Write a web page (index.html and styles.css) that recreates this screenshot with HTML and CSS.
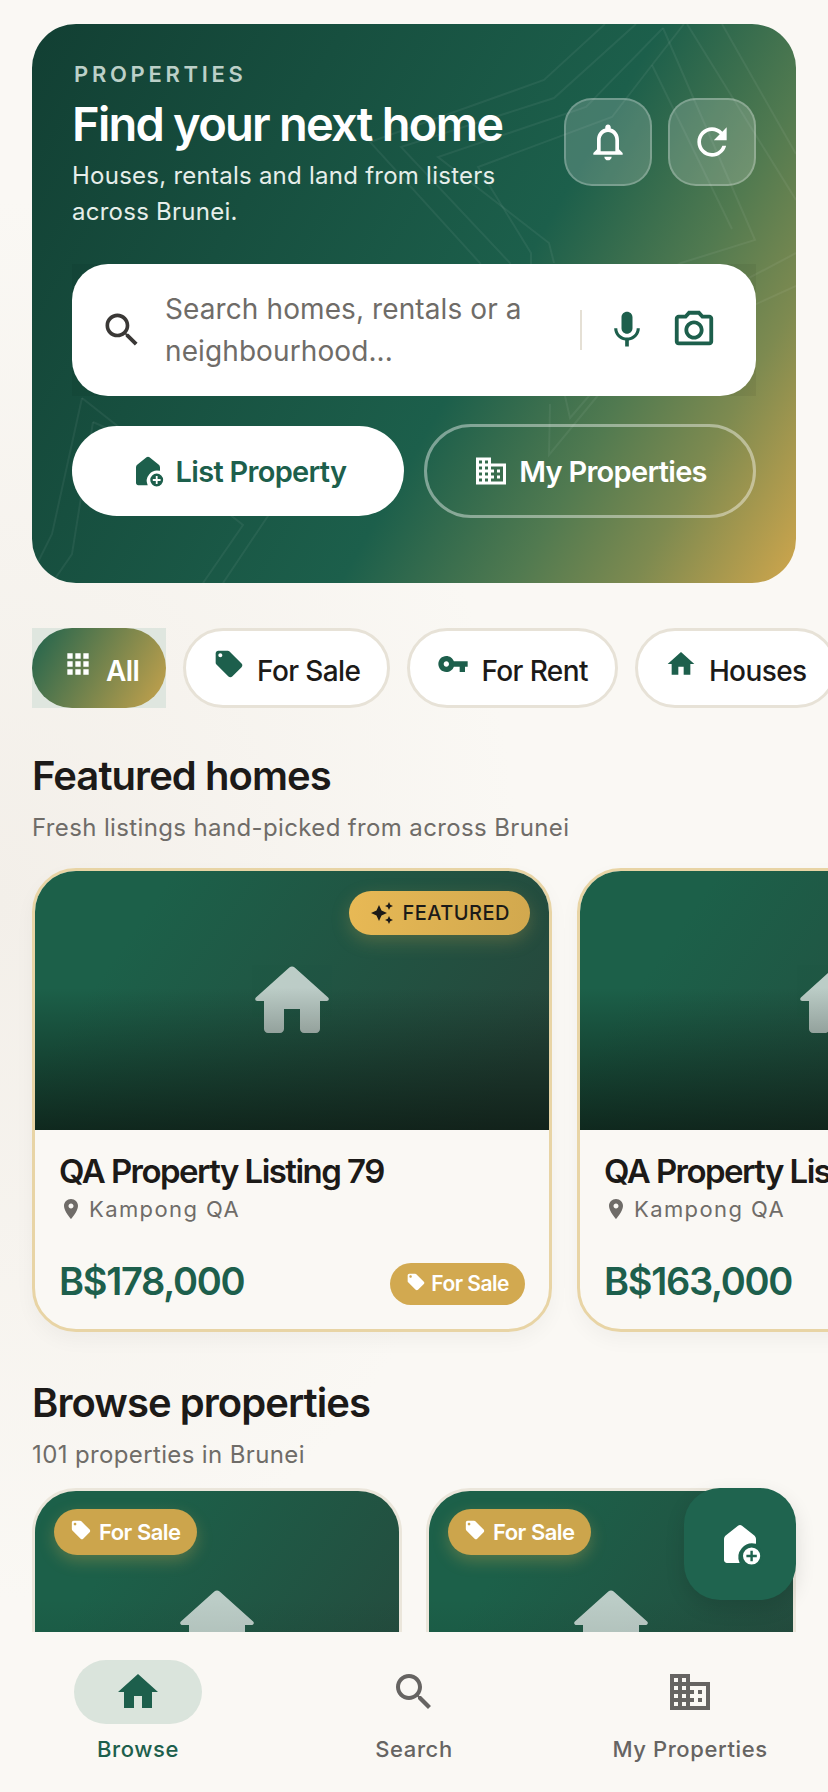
FILE: index.html
```html
<!DOCTYPE html>
<html lang="en">
<head>
  <meta charset="UTF-8" />
  <meta name="viewport" content="width=device-width, initial-scale=1.0" />
  <title>Properties</title>
  <link rel="stylesheet" href="styles.css">
</head>
<body>

  <!-- icon sheet -->
  <svg class="icon-sheet" xmlns="http://www.w3.org/2000/svg">
    <symbol id="i-bell" viewBox="0 0 24 24"><path d="M12 22c1.1 0 2-.9 2-2h-4c0 1.1.89 2 2 2zm6-6v-5c0-3.07-1.64-5.64-4.5-6.32V4c0-.83-.67-1.5-1.5-1.5s-1.5.67-1.5 1.5v.68C7.63 5.36 6 7.92 6 11v5l-2 2v1h16v-1l-2-2zm-2 1H8v-6c0-2.48 1.51-4.5 4-4.5s4 2.02 4 4.5v6z"/></symbol>
    <symbol id="i-refresh" viewBox="0 0 24 24"><path d="M17.65 6.35C16.2 4.9 14.21 4 12 4c-4.42 0-7.99 3.58-7.99 8s3.57 8 7.99 8c3.73 0 6.84-2.55 7.73-6h-2.08c-.82 2.33-3.04 4-5.65 4-3.31 0-6-2.69-6-6s2.69-6 6-6c1.66 0 3.14.69 4.22 1.78L13 11h7V4l-2.35 2.35z"/></symbol>
    <symbol id="i-search" viewBox="0 0 24 24"><path d="M15.5 14h-.79l-.28-.27C15.41 12.59 16 11.11 16 9.5 16 5.91 13.09 3 9.5 3S3 5.91 3 9.5 5.91 16 9.5 16c1.61 0 3.09-.59 4.23-1.57l.27.28v.79l5 4.99L20.49 19l-4.99-5zm-6 0C7.01 14 5 11.99 5 9.5S7.01 5 9.5 5 14 7.01 14 9.5 11.99 14 9.5 14z"/></symbol>
    <symbol id="i-mic" viewBox="0 0 24 24"><path d="M12 14c1.66 0 3-1.34 3-3V5c0-1.66-1.34-3-3-3S9 3.34 9 5v6c0 1.66 1.34 3 3 3zm5.3-3c0 3-2.54 5.1-5.3 5.1S6.7 14 6.7 11H5c0 3.41 2.72 6.23 6 6.72V21h2v-3.28c3.28-.48 6-3.3 6-6.72h-1.7z"/></symbol>
    <symbol id="i-camera" viewBox="0 0 24 24"><path d="M20 4h-3.17L15 2H9L7.17 4H4c-1.1 0-2 .9-2 2v12c0 1.1.9 2 2 2h16c1.1 0 2-.9 2-2V6c0-1.1-.9-2-2-2zm0 14H4V6h4.05l1.83-2h4.24l1.83 2H20v12zM12 7c-2.76 0-5 2.24-5 5s2.24 5 5 5 5-2.24 5-5-2.24-5-5-5zm0 8c-1.65 0-3-1.35-3-3s1.35-3 3-3 3 1.35 3 3-1.35 3-3 3z"/></symbol>
    <symbol id="i-domain" viewBox="0 0 24 24"><path d="M12 7V3H2v18h20V7H10zM6 19H4v-2h2v2zm0-4H4v-2h2v2zm0-4H4V9h2v2zm0-4H4V5h2v2zm4 12H8v-2h2v2zm0-4H8v-2h2v2zm0-4H8V9h2v2zm0-4H8V5h2v2zm10 12h-8v-2h2v-2h-2v-2h2v-2h-2V9h8v10zm-2-8h-2v2h2v-2zm0 4h-2v2h2v-2z"/></symbol>
    <symbol id="i-apps" viewBox="0 0 24 24"><path d="M4 8h4V4H4v4zm6 12h4v-4h-4v4zm-6 0h4v-4H4v4zm0-6h4v-4H4v4zm6 0h4v-4h-4v4zm6-10v4h4V4h-4zm-6 4h4V4h-4v4zm6 6h4v-4h-4v4zm0 6h4v-4h-4v4z"/></symbol>
    <symbol id="i-tag" viewBox="0 0 24 24"><path d="M21.41 11.58l-9-9C12.05 2.22 11.55 2 11 2H4c-1.1 0-2 .9-2 2v7c0 .55.22 1.05.59 1.42l9 9c.36.36.86.58 1.41.58.55 0 1.05-.22 1.41-.59l7-7c.37-.36.59-.86.59-1.41 0-.55-.23-1.06-.59-1.42zM5.5 7C4.67 7 4 6.33 4 5.5S4.67 4 5.5 4 7 4.67 7 5.5 6.33 7 5.5 7z"/></symbol>
    <symbol id="i-key" viewBox="0 0 24 24"><path d="M12.65 10C11.83 7.67 9.61 6 7 6c-3.31 0-6 2.69-6 6s2.69 6 6 6c2.61 0 4.83-1.67 5.65-4H17v4h4v-4h2v-4H12.65zM7 14c-1.1 0-2-.9-2-2s.9-2 2-2 2 .9 2 2-.9 2-2 2z"/></symbol>
    <symbol id="i-home" viewBox="0 0 24 24"><path d="M10 20v-6h4v6h5v-8h3L12 3 2 12h3v8z"/></symbol>
    <symbol id="i-home-round" viewBox="0 0 24 24"><path d="M10 19v-5h4v5c0 .55.45 1 1 1h3c.55 0 1-.45 1-1v-7h1.7c.46 0 .68-.57.33-.87L12.67 3.6c-.38-.34-.96-.34-1.34 0l-8.36 7.53c-.34.3-.13.87.33.87H5v7c0 .55.45 1 1 1h3c.55 0 1-.45 1-1z"/></symbol>
    <symbol id="i-pin" viewBox="0 0 24 24"><path d="M12 2C8.13 2 5 5.13 5 9c0 5.25 7 13 7 13s7-7.75 7-13c0-3.87-3.13-7-7-7zm0 9.5c-1.38 0-2.5-1.12-2.5-2.5s1.12-2.5 2.5-2.5 2.5 1.12 2.5 2.5-1.12 2.5-2.5 2.5z"/></symbol>
    <symbol id="i-sparkle" viewBox="0 0 24 24"><path d="M19 9l1.25-2.75L23 5l-2.75-1.25L19 1l-1.25 2.75L15 5l2.75 1.25L19 9zm-7.5.5L9 4 6.5 9.5 1 12l5.5 2.5L9 20l2.5-5.5L17 12l-5.5-2.5zM19 15l-1.25 2.75L15 19l2.75 1.25L19 23l1.25-2.75L23 19l-2.75-1.25L19 15z"/></symbol>
    <symbol id="i-house-base" viewBox="0 0 24 24"><path d="M12 2.5c-.4 0-.7.15-1 .4L5 7.6c-.6.5-1 1.2-1 2V20c0 .8.7 1.5 1.5 1.5h6.3a7 7 0 0 1 8.2-9.6V9.6c0-.8-.4-1.5-1-2l-6-4.7c-.3-.25-.6-.4-1-.4z"/></symbol>
  </svg>

  <section class="hero">
    <!-- faint star outlines behind the hero content -->
    <svg class="hero-lines" viewBox="0 0 764 559" fill="none">
      <polyline points="573,0 512,56 338,118 448,239 470,300"/>
      <polyline points="604,0 522,74 369,123 478,239 490,300"/>
      <polyline points="631,4 554,83 406,133 517,219 522,239"/>
      <polyline points="620,41 580,93 446,143 499,229 499,250"/>
      <polyline points="631,4 723,216 649,239 560,290"/>
      <polyline points="620,41 652,0"/>
      <polyline points="620,41 700,205"/>
      <polyline points="655,0 764,176"/>
      <polyline points="690,0 764,130"/>
      <polyline points="764,229 649,290"/>
      <polyline points="764,262 680,300"/>
      <polyline points="50,374 20,510 0,550"/>
      <polyline points="61,398 40,530 20,559"/>
      <polyline points="50,374 211,501 171,559"/>
      <polyline points="61,398 244,480 191,559"/>
      <polyline points="518,380 517,431 600,330"/>
      <polyline points="528,350 538,394 580,345"/>
    </svg>

    <div class="hero-top">
      <div class="hero-text">
        <div class="eyebrow">PROPERTIES</div>
        <h1>Find your next home</h1>
        <p>Houses, rentals and land from listers across Brunei.</p>
      </div>
      <div class="hero-btns">
        <div class="glass-btn"><svg class="icon icon-bell"><use href="#i-bell"/></svg></div>
        <div class="glass-btn"><svg class="icon icon-refresh"><use href="#i-refresh"/></svg></div>
      </div>
    </div>

    <div class="search-wrap">
      <div class="search">
        <svg class="icon icon-search"><use href="#i-search"/></svg>
        <div class="search-text">Search homes, rentals or a neighbourhood...</div>
        <div class="search-divider"></div>
        <svg class="icon icon-mic"><use href="#i-mic"/></svg>
        <svg class="icon icon-camera"><use href="#i-camera"/></svg>
      </div>
    </div>

    <div class="hero-actions">
      <div class="action action-solid">
        <svg class="icon icon-add" viewBox="0 0 24 24"><use href="#i-house-base"/><circle cx="17.8" cy="18" r="5"/><path class="add-plus" d="M17.8 15.4v5.2M15.2 18h5.2"/></svg>
        <span>List Property</span>
      </div>
      <div class="action action-ghost">
        <svg class="icon icon-domain"><use href="#i-domain"/></svg>
        <span>My Properties</span>
      </div>
    </div>
  </section>

  <div class="chips">
    <div class="chip-wrap">
      <div class="chip chip-active"><svg class="icon"><use href="#i-apps"/></svg><span>All</span></div>
    </div>
    <div class="chip"><svg class="icon"><use href="#i-tag"/></svg><span>For Sale</span></div>
    <div class="chip"><svg class="icon"><use href="#i-key"/></svg><span>For Rent</span></div>
    <div class="chip"><svg class="icon"><use href="#i-home"/></svg><span>Houses</span></div>
  </div>

  <div class="section-head">
    <h2>Featured homes</h2>
    <p>Fresh listings hand-picked from across Brunei</p>
  </div>

  <div class="featured-row">
    <article class="card">
      <div class="card-img">
        <div class="badge-featured"><svg class="icon"><use href="#i-sparkle"/></svg>FEATURED</div>
        <svg class="icon house"><use href="#i-home-round"/></svg>
      </div>
      <div class="card-body">
        <h3>QA Property Listing 79</h3>
        <div class="location"><svg class="icon"><use href="#i-pin"/></svg>Kampong QA</div>
        <div class="card-foot">
          <div class="price">B$178,000</div>
          <div class="tag"><svg class="icon"><use href="#i-tag"/></svg>For Sale</div>
        </div>
      </div>
    </article>
    <article class="card">
      <div class="card-img">
        <svg class="icon house"><use href="#i-home-round"/></svg>
      </div>
      <div class="card-body">
        <h3>QA Property Listing 82</h3>
        <div class="location"><svg class="icon"><use href="#i-pin"/></svg>Kampong QA</div>
        <div class="card-foot">
          <div class="price">B$163,000</div>
        </div>
      </div>
    </article>
  </div>

  <div class="section-head section-browse">
    <h2>Browse properties</h2>
    <p>101 properties in Brunei</p>
  </div>

  <div class="browse-grid">
    <article class="mini-card">
      <div class="tag tag-over"><svg class="icon"><use href="#i-tag"/></svg>For Sale</div>
      <svg class="icon house"><use href="#i-home-round"/></svg>
    </article>
    <article class="mini-card">
      <div class="tag tag-over"><svg class="icon"><use href="#i-tag"/></svg>For Sale</div>
      <svg class="icon house"><use href="#i-home-round"/></svg>
    </article>
  </div>

  <div class="fab">
    <svg class="icon icon-add" viewBox="0 0 24 24"><use href="#i-house-base"/><circle cx="17.8" cy="18" r="5"/><path class="add-plus" d="M17.8 15.4v5.2M15.2 18h5.2"/></svg>
  </div>

  <nav class="bottom-nav">
    <div class="nav-item nav-active">
      <div class="nav-pill"><svg class="icon"><use href="#i-home"/></svg></div>
      <span>Browse</span>
    </div>
    <div class="nav-item">
      <div class="nav-pill"><svg class="icon"><use href="#i-search"/></svg></div>
      <span>Search</span>
    </div>
    <div class="nav-item">
      <div class="nav-pill"><svg class="icon"><use href="#i-domain"/></svg></div>
      <span>My Properties</span>
    </div>
  </nav>

</body>
</html>
```

FILE: styles.css
```css
* {
  box-sizing: border-box;
}

html, body {
  margin: 0;
  height: 1792px;
  overflow: hidden;
}

body {
  position: relative;
  width: 828px;
  padding-top: 24px;
  background: radial-gradient(ellipse 520px 700px at 0 900px, #f3efe9, transparent), #faf8f4;
  color: #1c1a18;
  font-family: "Inter", "Noto Sans", sans-serif;
}

h1, h2, h3, p {
  margin: 0;
}

.icon-sheet {
  position: absolute;
  width: 0;
  height: 0;
}

.icon {
  display: block;
  flex-shrink: 0;
  width: 32px;
  height: 32px;
  fill: currentColor;
}

/* hero */
.hero {
  position: relative;
  height: 559px;
  margin: 0 32px;
  padding: 36px 40px 0;
  overflow: hidden;
  border-radius: 44px;
  background: linear-gradient(120deg, #123f33 0%, #1c5f4b 58%, #517a50 74%, #7d8a50 85%, #d0a64c 100%);
  color: #fff;
}

.hero-lines {
  position: absolute;
  top: 0;
  left: 0;
  width: 764px;
  height: 559px;
  stroke: rgba(255, 255, 255, 0.06);
  stroke-width: 2;
}

.hero-top {
  position: relative;
  display: flex;
  justify-content: space-between;
}

.hero-text {
  width: 460px;
}

.eyebrow {
  margin-left: 2px;
  color: #bcd0c8;
  font-size: 22px;
  font-weight: 600;
  line-height: 28px;
  letter-spacing: 3.7px;
}

h1 {
  margin-top: 6px;
  font-size: 47px;
  font-weight: 600;
  line-height: 60px;
  letter-spacing: -1.75px;
  white-space: nowrap;
}

.hero-text p {
  margin-top: 4px;
  color: #e6eeea;
  font-size: 24px;
  line-height: 36px;
  letter-spacing: 0.25px;
}

.hero-btns {
  display: flex;
  gap: 16px;
  margin-top: 38px;
}

.glass-btn {
  display: flex;
  align-items: center;
  justify-content: center;
  width: 88px;
  height: 88px;
  border: 2px solid rgba(255, 255, 255, 0.24);
  border-radius: 28px;
  background: rgba(255, 255, 255, 0.18);
}

.icon-bell, .icon-refresh {
  width: 44px;
  height: 44px;
}

.search-wrap {
  position: relative;
  margin-top: 34px;
  background: rgba(0, 0, 0, 0.05);
}

.search {
  display: flex;
  align-items: center;
  height: 132px;
  padding: 0 28px;
  border-radius: 36px;
  background: #fff;
}

.icon-search {
  width: 44px;
  height: 44px;
  color: #3a3836;
}

.search-text {
  width: 382px;
  margin-left: 21px;
  color: #6f6c68;
  font-size: 28px;
  line-height: 42px;
  letter-spacing: 0.1px;
}

.search-divider {
  width: 2px;
  height: 40px;
  margin-left: 33px;
  background: #e5e0d5;
}

.icon-mic {
  width: 44px;
  height: 44px;
  margin-left: 23px;
  color: #1d5f4c;
}

.icon-camera {
  width: 46px;
  height: 46px;
  margin-left: 22px;
  color: #1d5f4c;
}

.hero-actions {
  position: relative;
  display: grid;
  grid-template-columns: 1fr 1fr;
  align-items: center;
  gap: 20px;
  margin-top: 28px;
}

.action {
  display: flex;
  align-items: center;
  justify-content: center;
  gap: 10px;
  border-radius: 50px;
  font-size: 29px;
  font-weight: 600;
  letter-spacing: -0.7px;
}

.action-solid {
  height: 90px;
  background: #fff;
  color: #1d5f4c;
}

.action-ghost {
  height: 94px;
  border: 3px solid rgba(255, 255, 255, 0.42);
  color: #fff;
}

.action .icon {
  width: 36px;
  height: 36px;
}

.icon-add circle {
  fill: currentColor;
  stroke: #fff;
  stroke-width: 1.4;
}

.add-plus {
  fill: none;
  stroke: #fff;
  stroke-width: 1.2;
}

/* filter chips */
.chips {
  display: flex;
  gap: 17px;
  margin: 45px 0 0 32px;
}

.chip-wrap {
  flex-shrink: 0;
  background: #dfe6df;
}

.chip {
  display: flex;
  flex-shrink: 0;
  align-items: center;
  gap: 12px;
  height: 80px;
  padding: 0 27px;
  border: 3px solid #e7e2d7;
  border-radius: 40px;
  background: #fff;
  font-size: 28px;
  font-weight: 500;
  letter-spacing: -0.6px;
}

.chip .icon {
  width: 32px;
  height: 32px;
  margin-top: -8px;
  color: #1d5f4c;
}

.chip span {
  margin-top: 5px;
}

.chip-active {
  width: 134px;
  padding: 0 30px;
  border: none;
  background: linear-gradient(120deg, #1f634d, #c7a34c);
  color: #fff;
  font-weight: 600;
}

.chip-active .icon {
  color: #fff;
}

/* section headings */
.section-head {
  margin: 42px 32px 0;
}

.section-browse {
  margin-top: 45px;
}

h2 {
  font-size: 40px;
  font-weight: 600;
  line-height: 52px;
  letter-spacing: -0.95px;
}

.section-head p {
  margin-top: 10px;
  color: #6f6c68;
  font-size: 24px;
  line-height: 32px;
  letter-spacing: 0.37px;
}

/* featured cards */
.featured-row {
  display: flex;
  gap: 25px;
  margin: 24px 0 0 32px;
}

.card {
  flex-shrink: 0;
  width: 520px;
  height: 464px;
  overflow: hidden;
  border: 3px solid #e8d4a5;
  border-radius: 44px;
  background: #faf8f4;
  box-shadow: 0 8px 20px rgba(0, 0, 0, 0.04);
}

.card-img {
  position: relative;
  display: flex;
  align-items: center;
  justify-content: center;
  height: 259px;
  background: linear-gradient(125deg, #1c6049 20%, #26483c 90%);
}

/* darkening that also falls over the house icon */
.card-img::after {
  content: "";
  position: absolute;
  top: 0;
  right: 0;
  bottom: 0;
  left: 0;
  background: linear-gradient(180deg, transparent 45%, rgba(10, 20, 14, 0.72) 100%);
}

.house {
  width: 96px;
  height: 96px;
  color: #fff;
  opacity: 0.7;
}

.badge-featured {
  position: absolute;
  z-index: 1;
  top: 20px;
  right: 19px;
  display: flex;
  align-items: center;
  gap: 8px;
  height: 44px;
  padding: 0 20px 0 21px;
  border-radius: 22px;
  background: linear-gradient(100deg, #e8b955, #d1a84e);
  box-shadow: 0 6px 18px rgba(216, 173, 80, 0.25);
  color: #1c1a18;
  font-size: 20px;
  font-weight: 500;
  letter-spacing: 0.5px;
}

.badge-featured .icon {
  width: 24px;
  height: 24px;
}

.card-body {
  padding: 19px 24px 0;
}

h3 {
  font-size: 33px;
  font-weight: 600;
  line-height: 44px;
  letter-spacing: -1.55px;
  white-space: nowrap;
}

.location {
  display: flex;
  align-items: center;
  gap: 6px;
  margin-top: 1px;
  color: #6f6c68;
  font-size: 22px;
  line-height: 30px;
  letter-spacing: 1.4px;
}

.location .icon {
  width: 24px;
  height: 24px;
}

.card-foot {
  display: flex;
  align-items: center;
  justify-content: space-between;
  margin-top: 33px;
}

.price {
  color: #1d5f4c;
  font-size: 38px;
  font-weight: 600;
  line-height: 48px;
  letter-spacing: -1.3px;
}

.tag {
  display: flex;
  align-items: center;
  gap: 5px;
  height: 42px;
  margin-top: 5px;
  padding: 0 16px;
  border-radius: 21px;
  background: #d2a950;
  color: #fff;
  font-size: 21px;
  font-weight: 600;
  letter-spacing: -0.5px;
}

.tag .icon {
  width: 20px;
  height: 20px;
  margin-top: -4px;
}

/* browse grid */
.browse-grid {
  display: grid;
  grid-template-columns: 370px 370px;
  gap: 24px;
  margin: 17px 32px 0;
}

.mini-card {
  position: relative;
  display: flex;
  justify-content: center;
  height: 360px;
  padding-top: 86px;
  overflow: hidden;
  border: 3px solid #ebe6db;
  border-bottom: none;
  border-radius: 44px;
  background: linear-gradient(125deg, #1c6049 20%, #26483c 90%);
}

.mini-card::after {
  content: "";
  position: absolute;
  top: 0;
  right: 0;
  bottom: 0;
  left: 0;
  background: linear-gradient(180deg, transparent 30%, rgba(10, 20, 14, 0.4) 100%);
}

.tag-over {
  position: absolute;
  z-index: 1;
  top: 18px;
  left: 19px;
  gap: 7px;
  height: 46px;
  margin-top: 0;
  border-radius: 23px;
  background: #cca54c;
  box-shadow: 0 6px 16px rgba(216, 173, 80, 0.3);
  font-size: 22px;
}

.tag-over .icon {
  width: 22px;
  height: 22px;
}

/* floating button */
.fab {
  position: absolute;
  top: 1488px;
  right: 32px;
  display: flex;
  align-items: center;
  justify-content: center;
  width: 112px;
  height: 112px;
  border-radius: 36px;
  background: #1f644f;
  box-shadow: 0 8px 20px rgba(0, 0, 0, 0.12);
  color: #fff;
}

.fab .icon-add {
  width: 48px;
  height: 48px;
}

.fab .icon-add circle {
  stroke: #1f644f;
}

.fab .add-plus {
  stroke: #1f644f;
}

/* bottom nav */
.bottom-nav {
  position: absolute;
  top: 1632px;
  left: 0;
  display: flex;
  width: 828px;
  height: 160px;
  padding-top: 28px;
  background: #faf8f4;
}

.nav-item {
  display: flex;
  flex: 1;
  flex-direction: column;
  align-items: center;
  color: #666462;
  font-size: 22px;
  font-weight: 500;
  letter-spacing: 0.6px;
}

.nav-pill {
  display: flex;
  align-items: center;
  justify-content: center;
  width: 128px;
  height: 64px;
  border-radius: 32px;
}

.nav-pill .icon {
  width: 48px;
  height: 48px;
}

.nav-item span {
  margin-top: 10px;
  line-height: 30px;
}

.nav-active {
  color: #1d5f4c;
}

.nav-active .nav-pill {
  background: #dae4dc;
}
```
